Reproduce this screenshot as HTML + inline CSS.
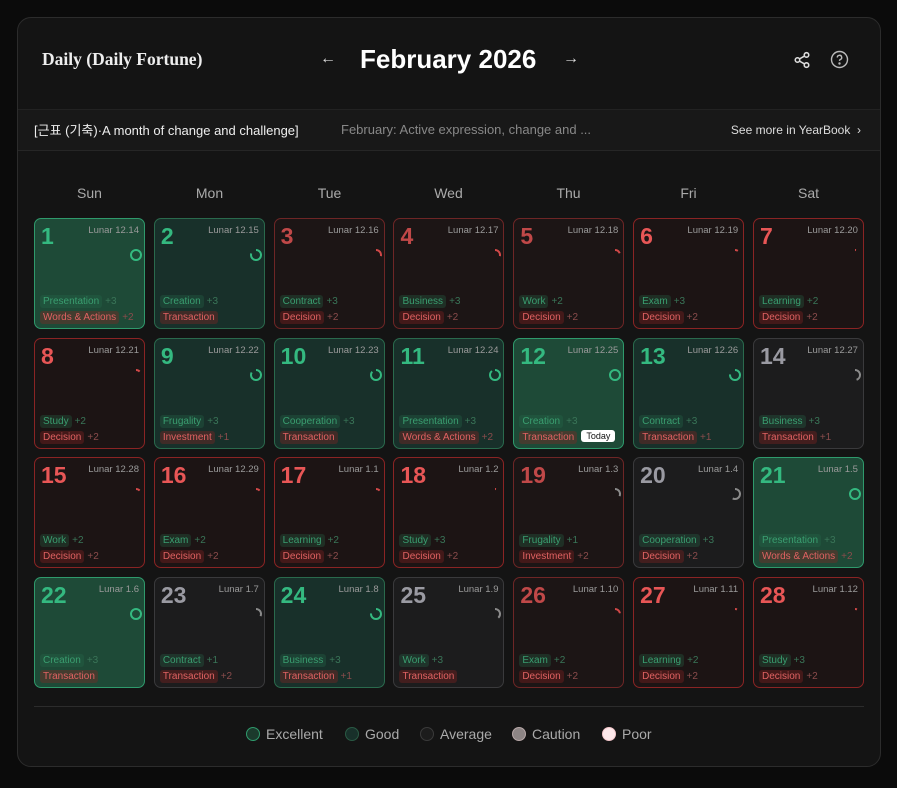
<!DOCTYPE html><html><head><meta charset="utf-8"><style>
*{box-sizing:border-box;margin:0;padding:0}
body{width:897px;height:788px;background:#0b0b0b;font-family:"Liberation Sans","Noto Sans CJK KR",sans-serif;position:relative;overflow:hidden;color:#ddd}
.card{position:absolute;left:17px;top:17px;width:864px;height:750px;background:#141414;border:1px solid #2c2c2c;border-radius:14px;overflow:hidden}
.hdr{position:absolute;left:0;top:0;width:100%;height:91px}
.ttl{position:absolute;left:24px;top:31px;font-family:"Liberation Serif",serif;font-size:17.5px;font-weight:bold;color:#eee}
.month{position:absolute;left:342px;top:26px;font-size:26px;font-weight:bold;color:#fff}
.arr{position:absolute;top:32px;font-size:16px;color:#ddd}
.sub{position:absolute;left:0;top:91px;width:100%;height:42px;background:#181818;border-top:1px solid #222;border-bottom:1px solid #262626}
.sub .sa{position:absolute;left:16px;top:10px;font-size:13px;color:#eee}
.sub .sb{position:absolute;left:323px;top:12px;font-size:13px;color:#888}
.sub .sc{position:absolute;right:19px;top:13px;font-size:12px;color:#ddd;white-space:nowrap}
.wd{position:absolute;top:167px;width:111px;text-align:center;font-size:14px;color:#aaa}
.grid{position:absolute;left:16px;top:200px;display:grid;grid-template-columns:repeat(7,111px);column-gap:8.83px;row-gap:8.67px}
.c{position:relative;width:111px;height:111px;border-radius:7px;border:1px solid}
.E{background:#1e4a37;border-color:#2f9a6c}
.G{background:#18302a;border-color:#2a6a4d}
.A{background:#1c1c1d;border-color:#3a3a3c}
.C{background:#1c1515;border-color:#6e2626}
.P{background:#1c1414;border-color:#8a2424}
.n{position:absolute;left:6px;top:4px;font-size:23px;font-weight:bold}
.E .n,.G .n{color:#34b980}.A .n{color:#9a9aa2}.C .n{color:#c04848}.P .n{color:#e85656}
.l{position:absolute;right:5px;top:6px;font-size:9.5px;color:#9a9a9a}
.r{position:absolute;left:94px;top:29px;transform:rotate(-90deg)}
.t{position:absolute;left:5px;font-size:10px;white-space:nowrap}
.t1{top:76px}.t2{top:92px}
.t span{display:inline-block;padding:1px 3px;border-radius:3px}
.t1 span{color:#3a9e70;background:rgba(40,110,75,.3)}
.t2 span{color:#e06262;background:rgba(140,35,35,.35)}
.t1 i{font-style:normal;color:#3a7558;margin-left:3px}
.t2 i{font-style:normal;color:#8a4c4c;margin-left:3px}
.today{position:absolute;left:67px;top:91px;background:#fff;color:#111;font-size:9px;padding:1px 5px;border-radius:3px}
.leg{position:absolute;left:16px;top:688px;width:830px;border-top:1px solid #2c2c2c}
.li{position:absolute;top:19px;font-size:14px;color:#aaa}
.li b{display:inline-block;width:14px;height:14px;border-radius:50%;vertical-align:-2px;margin-right:6px;border:1px solid}
</style></head><body><div class="card">
<div class="hdr"><div class="ttl">Daily (Daily Fortune)</div>
<div class="arr" style="left:302px">←</div><div class="month">February 2026</div><div class="arr" style="left:545px">→</div>
<svg style="position:absolute;left:775px;top:33px" width="18" height="18" viewBox="0 0 16 16" fill="none" stroke="#ddd" stroke-width="1.4"><circle cx="12" cy="3.5" r="2"/><circle cx="4" cy="8" r="2"/><circle cx="12" cy="12.5" r="2"/><path d="M5.8 7 10.2 4.5M5.8 9 10.2 11.5"/></svg>
<svg style="position:absolute;left:812px;top:32px" width="19" height="19" viewBox="0 0 19 19" fill="none" stroke="#bbb" stroke-width="1.4"><circle cx="9.5" cy="9.5" r="8"/><path d="M7.3 7.5a2.2 2.2 0 1 1 3 2c-.6.3-.8.7-.8 1.4"/><circle cx="9.5" cy="13.5" r=".5" fill="#bbb"/></svg>
</div>
<div class="sub"><div class="sa">[근표 (기축)·A month of change and challenge]</div><div class="sb">February: Active expression, change and ...</div><div class="sc">See more in YearBook &nbsp;›</div></div>
<div class="wd" style="left:16px">Sun</div><div class="wd" style="left:136px">Mon</div><div class="wd" style="left:256px">Tue</div><div class="wd" style="left:375px">Wed</div><div class="wd" style="left:495px">Thu</div><div class="wd" style="left:615px">Fri</div><div class="wd" style="left:735px">Sat</div>
<div class="grid">
<div class="c E"><div class="n">1</div><div class="l">Lunar 12.14</div><svg class="r" width="14" height="14"><circle cx="7" cy="7" r="5" fill="none" stroke="#34b980" stroke-width="2"/></svg><div class="t t1"><span>Presentation</span><i>+3</i></div><div class="t t2"><span>Words &amp; Actions</span><i>+2</i></div></div>
<div class="c G"><div class="n">2</div><div class="l">Lunar 12.15</div><svg class="r" width="14" height="14"><circle cx="7" cy="7" r="5" fill="none" stroke="#34b980" stroke-width="2" stroke-dasharray="25 32"/></svg><div class="t t1"><span>Creation</span><i>+3</i></div><div class="t t2"><span>Transaction</span></div></div>
<div class="c C"><div class="n">3</div><div class="l">Lunar 12.16</div><svg class="r" width="14" height="14"><circle cx="7" cy="7" r="5" fill="none" stroke="#d04848" stroke-width="2" stroke-dasharray="9 32"/></svg><div class="t t1"><span>Contract</span><i>+3</i></div><div class="t t2"><span>Decision</span><i>+2</i></div></div>
<div class="c C"><div class="n">4</div><div class="l">Lunar 12.17</div><svg class="r" width="14" height="14"><circle cx="7" cy="7" r="5" fill="none" stroke="#d04848" stroke-width="2" stroke-dasharray="9 32"/></svg><div class="t t1"><span>Business</span><i>+3</i></div><div class="t t2"><span>Decision</span><i>+2</i></div></div>
<div class="c C"><div class="n">5</div><div class="l">Lunar 12.18</div><svg class="r" width="14" height="14"><circle cx="7" cy="7" r="5" fill="none" stroke="#d04848" stroke-width="2" stroke-dasharray="6 32"/></svg><div class="t t1"><span>Work</span><i>+2</i></div><div class="t t2"><span>Decision</span><i>+2</i></div></div>
<div class="c P"><div class="n">6</div><div class="l">Lunar 12.19</div><svg class="r" width="14" height="14"><circle cx="7" cy="7" r="5" fill="none" stroke="#d04848" stroke-width="2" stroke-dasharray="3 32"/></svg><div class="t t1"><span>Exam</span><i>+3</i></div><div class="t t2"><span>Decision</span><i>+2</i></div></div>
<div class="c P"><div class="n">7</div><div class="l">Lunar 12.20</div><svg class="r" width="14" height="14"><circle cx="7" cy="7" r="5" fill="none" stroke="#d04848" stroke-width="2" stroke-dasharray="1 32"/></svg><div class="t t1"><span>Learning</span><i>+2</i></div><div class="t t2"><span>Decision</span><i>+2</i></div></div>
<div class="c P"><div class="n">8</div><div class="l">Lunar 12.21</div><svg class="r" width="14" height="14"><circle cx="7" cy="7" r="5" fill="none" stroke="#d04848" stroke-width="2" stroke-dasharray="4 32"/></svg><div class="t t1"><span>Study</span><i>+2</i></div><div class="t t2"><span>Decision</span><i>+2</i></div></div>
<div class="c G"><div class="n">9</div><div class="l">Lunar 12.22</div><svg class="r" width="14" height="14"><circle cx="7" cy="7" r="5" fill="none" stroke="#34b980" stroke-width="2" stroke-dasharray="26 32"/></svg><div class="t t1"><span>Frugality</span><i>+3</i></div><div class="t t2"><span>Investment</span><i>+1</i></div></div>
<div class="c G"><div class="n">10</div><div class="l">Lunar 12.23</div><svg class="r" width="14" height="14"><circle cx="7" cy="7" r="5" fill="none" stroke="#34b980" stroke-width="2" stroke-dasharray="27 32"/></svg><div class="t t1"><span>Cooperation</span><i>+3</i></div><div class="t t2"><span>Transaction</span></div></div>
<div class="c G"><div class="n">11</div><div class="l">Lunar 12.24</div><svg class="r" width="14" height="14"><circle cx="7" cy="7" r="5" fill="none" stroke="#34b980" stroke-width="2" stroke-dasharray="28 32"/></svg><div class="t t1"><span>Presentation</span><i>+3</i></div><div class="t t2"><span>Words &amp; Actions</span><i>+2</i></div></div>
<div class="c E"><div class="n">12</div><div class="l">Lunar 12.25</div><svg class="r" width="14" height="14"><circle cx="7" cy="7" r="5" fill="none" stroke="#34b980" stroke-width="2"/></svg><div class="t t1"><span>Creation</span><i>+3</i></div><div class="t t2"><span>Transaction</span></div><div class="today">Today</div></div>
<div class="c G"><div class="n">13</div><div class="l">Lunar 12.26</div><svg class="r" width="14" height="14"><circle cx="7" cy="7" r="5" fill="none" stroke="#34b980" stroke-width="2" stroke-dasharray="24 32"/></svg><div class="t t1"><span>Contract</span><i>+3</i></div><div class="t t2"><span>Transaction</span><i>+1</i></div></div>
<div class="c A"><div class="n">14</div><div class="l">Lunar 12.27</div><svg class="r" width="14" height="14"><circle cx="7" cy="7" r="5" fill="none" stroke="#8a8a8a" stroke-width="2" stroke-dasharray="14 32"/></svg><div class="t t1"><span>Business</span><i>+3</i></div><div class="t t2"><span>Transaction</span><i>+1</i></div></div>
<div class="c P"><div class="n">15</div><div class="l">Lunar 12.28</div><svg class="r" width="14" height="14"><circle cx="7" cy="7" r="5" fill="none" stroke="#d04848" stroke-width="2" stroke-dasharray="4 32"/></svg><div class="t t1"><span>Work</span><i>+2</i></div><div class="t t2"><span>Decision</span><i>+2</i></div></div>
<div class="c P"><div class="n">16</div><div class="l">Lunar 12.29</div><svg class="r" width="14" height="14"><circle cx="7" cy="7" r="5" fill="none" stroke="#d04848" stroke-width="2" stroke-dasharray="4 32"/></svg><div class="t t1"><span>Exam</span><i>+2</i></div><div class="t t2"><span>Decision</span><i>+2</i></div></div>
<div class="c P"><div class="n">17</div><div class="l">Lunar 1.1</div><svg class="r" width="14" height="14"><circle cx="7" cy="7" r="5" fill="none" stroke="#d04848" stroke-width="2" stroke-dasharray="4 32"/></svg><div class="t t1"><span>Learning</span><i>+2</i></div><div class="t t2"><span>Decision</span><i>+2</i></div></div>
<div class="c P"><div class="n">18</div><div class="l">Lunar 1.2</div><svg class="r" width="14" height="14"><circle cx="7" cy="7" r="5" fill="none" stroke="#d04848" stroke-width="2" stroke-dasharray="1 32"/></svg><div class="t t1"><span>Study</span><i>+3</i></div><div class="t t2"><span>Decision</span><i>+2</i></div></div>
<div class="c C"><div class="n">19</div><div class="l">Lunar 1.3</div><svg class="r" width="14" height="14"><circle cx="7" cy="7" r="5" fill="none" stroke="#8a8a8a" stroke-width="2" stroke-dasharray="10 32"/></svg><div class="t t1"><span>Frugality</span><i>+1</i></div><div class="t t2"><span>Investment</span><i>+2</i></div></div>
<div class="c A"><div class="n">20</div><div class="l">Lunar 1.4</div><svg class="r" width="14" height="14"><circle cx="7" cy="7" r="5" fill="none" stroke="#8a8a8a" stroke-width="2" stroke-dasharray="18 32"/></svg><div class="t t1"><span>Cooperation</span><i>+3</i></div><div class="t t2"><span>Decision</span><i>+2</i></div></div>
<div class="c E"><div class="n">21</div><div class="l">Lunar 1.5</div><svg class="r" width="14" height="14"><circle cx="7" cy="7" r="5" fill="none" stroke="#34b980" stroke-width="2"/></svg><div class="t t1"><span>Presentation</span><i>+3</i></div><div class="t t2"><span>Words &amp; Actions</span><i>+2</i></div></div>
<div class="c E"><div class="n">22</div><div class="l">Lunar 1.6</div><svg class="r" width="14" height="14"><circle cx="7" cy="7" r="5" fill="none" stroke="#34b980" stroke-width="2"/></svg><div class="t t1"><span>Creation</span><i>+3</i></div><div class="t t2"><span>Transaction</span></div></div>
<div class="c A"><div class="n">23</div><div class="l">Lunar 1.7</div><svg class="r" width="14" height="14"><circle cx="7" cy="7" r="5" fill="none" stroke="#8a8a8a" stroke-width="2" stroke-dasharray="10 32"/></svg><div class="t t1"><span>Contract</span><i>+1</i></div><div class="t t2"><span>Transaction</span><i>+2</i></div></div>
<div class="c G"><div class="n">24</div><div class="l">Lunar 1.8</div><svg class="r" width="14" height="14"><circle cx="7" cy="7" r="5" fill="none" stroke="#34b980" stroke-width="2" stroke-dasharray="24 32"/></svg><div class="t t1"><span>Business</span><i>+3</i></div><div class="t t2"><span>Transaction</span><i>+1</i></div></div>
<div class="c A"><div class="n">25</div><div class="l">Lunar 1.9</div><svg class="r" width="14" height="14"><circle cx="7" cy="7" r="5" fill="none" stroke="#8a8a8a" stroke-width="2" stroke-dasharray="12 32"/></svg><div class="t t1"><span>Work</span><i>+3</i></div><div class="t t2"><span>Transaction</span></div></div>
<div class="c C"><div class="n">26</div><div class="l">Lunar 1.10</div><svg class="r" width="14" height="14"><circle cx="7" cy="7" r="5" fill="none" stroke="#d04848" stroke-width="2" stroke-dasharray="7 32"/></svg><div class="t t1"><span>Exam</span><i>+2</i></div><div class="t t2"><span>Decision</span><i>+2</i></div></div>
<div class="c P"><div class="n">27</div><div class="l">Lunar 1.11</div><svg class="r" width="14" height="14"><circle cx="7" cy="7" r="5" fill="none" stroke="#d04848" stroke-width="2" stroke-dasharray="2 32"/></svg><div class="t t1"><span>Learning</span><i>+2</i></div><div class="t t2"><span>Decision</span><i>+2</i></div></div>
<div class="c P"><div class="n">28</div><div class="l">Lunar 1.12</div><svg class="r" width="14" height="14"><circle cx="7" cy="7" r="5" fill="none" stroke="#d04848" stroke-width="2" stroke-dasharray="2 32"/></svg><div class="t t1"><span>Study</span><i>+3</i></div><div class="t t2"><span>Decision</span><i>+2</i></div></div>
</div>
<div class="leg">
<div class="li" style="left:212px"><b style="background:#1b3a2c;border-color:#2f9a6c"></b>Excellent</div>
<div class="li" style="left:311px"><b style="background:#18302a;border-color:#2a5a44"></b>Good</div>
<div class="li" style="left:386px"><b style="background:#1c1c1c;border-color:#3a3a3a"></b>Average</div>
<div class="li" style="left:478px"><b style="background:#8d8585;border-color:#b8a8a8"></b>Caution</div>
<div class="li" style="left:568px"><b style="background:#fde8ea;border-color:#f4c8cc"></b>Poor</div>
</div>
</div></body></html>
